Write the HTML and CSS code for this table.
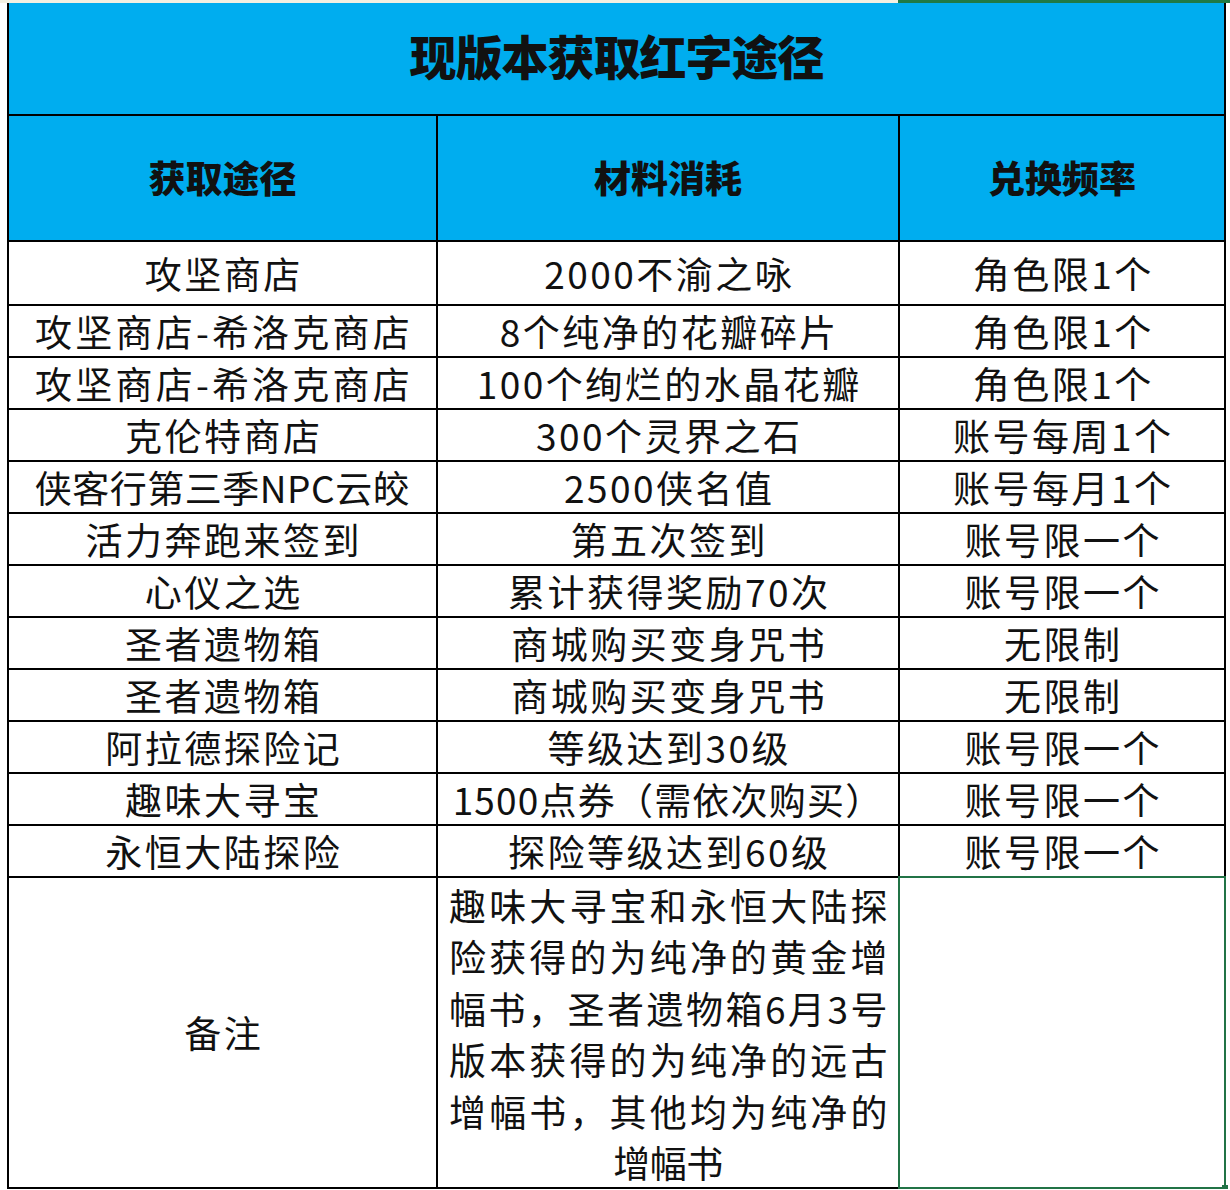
FILE: index.html
```html
<!DOCTYPE html>
<html lang="zh-CN">
<head>
<meta charset="utf-8">
<title>现版本获取红字途径</title>
<link rel="stylesheet" href="styles.css">
</head>
<body>
<div class="topbar"><div class="cream"></div><div class="green"></div></div>
<div class="page">
  <div class="sheet">
    <div class="cell title">现版本获取红字途径</div>
    <div class="cell head">获取途径</div>
    <div class="cell head">材料消耗</div>
    <div class="cell head">兑换频率</div>

    <div class="cell">攻坚商店</div>
    <div class="cell">2000不渝之咏</div>
    <div class="cell">角色限1个</div>

    <div class="cell wide">攻坚商店-希洛克商店</div>
    <div class="cell">8个纯净的花瓣碎片</div>
    <div class="cell">角色限1个</div>

    <div class="cell wide">攻坚商店-希洛克商店</div>
    <div class="cell">100个绚烂的水晶花瓣</div>
    <div class="cell">角色限1个</div>

    <div class="cell">克伦特商店</div>
    <div class="cell">300个灵界之石</div>
    <div class="cell">账号每周1个</div>

    <div class="cell tight">侠客行第三季NPC云皎</div>
    <div class="cell">2500侠名值</div>
    <div class="cell">账号每月1个</div>

    <div class="cell">活力奔跑来签到</div>
    <div class="cell">第五次签到</div>
    <div class="cell">账号限一个</div>

    <div class="cell">心仪之选</div>
    <div class="cell">累计获得奖励70次</div>
    <div class="cell">账号限一个</div>

    <div class="cell">圣者遗物箱</div>
    <div class="cell">商城购买变身咒书</div>
    <div class="cell">无限制</div>

    <div class="cell">圣者遗物箱</div>
    <div class="cell">商城购买变身咒书</div>
    <div class="cell">无限制</div>

    <div class="cell">阿拉德探险记</div>
    <div class="cell">等级达到30级</div>
    <div class="cell">账号限一个</div>

    <div class="cell">趣味大寻宝</div>
    <div class="cell narrow">1500点券（需依次购买）</div>
    <div class="cell">账号限一个</div>

    <div class="cell">永恒大陆探险</div>
    <div class="cell">探险等级达到60级</div>
    <div class="cell">账号限一个</div>

    <div class="cell">备注</div>
    <div class="cell note">
      <span class="ln">趣味大寻宝和永恒大陆探</span>
      <span class="ln">险获得的为纯净的黄金增</span>
      <span class="ln">幅书，圣者遗物箱6月3号</span>
      <span class="ln">版本获得的为纯净的远古</span>
      <span class="ln">增幅书，其他均为纯净的</span>
      <span class="ln last">增幅书</span>
    </div>
    <div class="cell sel"></div>
  </div>
</div>
</body>
</html>
```

FILE: styles.css
```css
html, body {
  margin: 0;
  padding: 0;
  background: #ffffff;
}

body {
  font-family: "Noto Sans CJK SC", "Noto Sans", sans-serif;
  color: #111111;
}

.topbar {
  display: flex;
  height: 3px;
}

.cream {
  width: 898px;
  background: #f3f0e2;
}

.green {
  flex: 1;
  background: #1f7a45;
}

.page {
  padding-left: 7px;
}

.sheet {
  width: 1219px;
  box-sizing: border-box;
  display: grid;
  grid-template-columns: 427px 460px 324px;
  grid-template-rows: 111px 124px 62px repeat(11, 50px) 309px;
  gap: 2px;
  padding: 0 2px 2px 2px;
  background: #000000;
}

.cell {
  background: #ffffff;
  display: flex;
  align-items: center;
  justify-content: center;
  font-size: 37px;
  font-weight: 400;
  letter-spacing: 2.5px;
  padding-left: 2.5px;
  white-space: nowrap;
  line-height: 1;
}

.title {
  grid-column: 1 / -1;
  background: #00adef;
  font-size: 47px;
  font-weight: 900;
  letter-spacing: -1px;
  padding-left: 0;
  padding-bottom: 8px;
}

.head {
  background: #00adef;
  font-size: 37px;
  font-weight: 900;
  letter-spacing: 0;
  padding-left: 0;
  padding-bottom: 2px;
}

.wide {
  letter-spacing: 3.2px;
  padding-left: 3px;
}

.tight {
  letter-spacing: 0.5px;
  padding-left: 0;
}

.narrow {
  letter-spacing: 1.2px;
  padding-left: 0;
}

.note {
  flex-direction: column;
  letter-spacing: -0.5px;
  padding-left: 0;
  padding-top: 3px;
  line-height: 51.5px;
  white-space: normal;
}

.ln {
  display: block;
  width: 438px;
  text-align: justify;
  text-align-last: justify;
  white-space: nowrap;
}

.ln.last {
  text-align: center;
  text-align-last: center;
}

.sel {
  position: relative;
}

.sel::after {
  content: "";
  position: absolute;
  top: -2px;
  left: -2px;
  right: -2px;
  bottom: -2px;
  border: 2px solid #217346;
}

.sel::before {
  content: "";
  position: absolute;
  right: -4px;
  bottom: -4px;
  width: 6px;
  height: 6px;
  background: #217346;
  z-index: 1;
}
```
